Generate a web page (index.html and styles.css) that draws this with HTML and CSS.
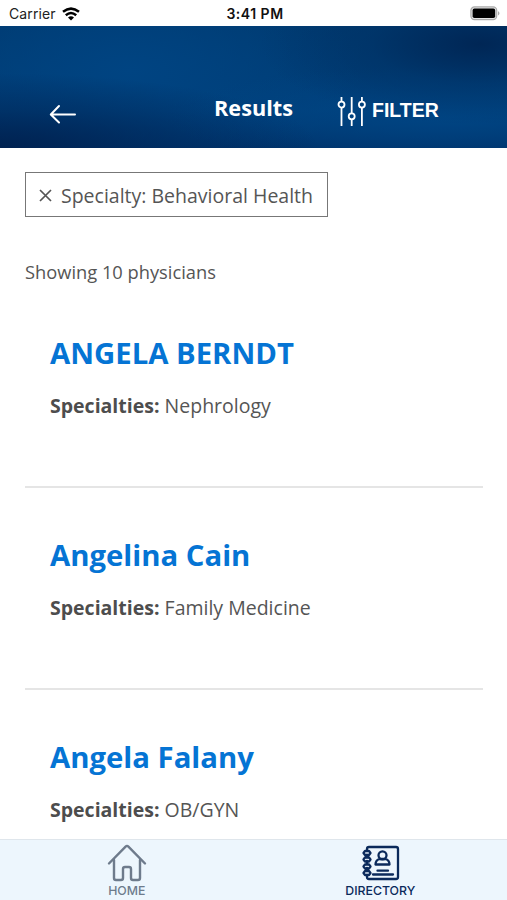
FILE: index.html
```html
<!DOCTYPE html>
<html lang="en">
<head>
<meta charset="utf-8">
    <title>Results</title>
    <link rel="stylesheet" href="styles.css">
</head>
<body>
    <div class="status">
        <div class="carrier">
            <span>Carrier</span>
            <svg width="18" height="14" viewBox="0 0 18 14">
                <path d="M1 4.8Q9-1.6 17 4.8M3.8 8.2Q9 3.8 14.2 8.2" fill="none" stroke="#000" stroke-width="2.5"/>
                <path d="M6 10.5Q9 8.2 12 10.5L9 13.6z"/>
            </svg>
        </div>
        <span class="time">3:41 PM</span>
        <div class="battery">
            <svg width="31" height="15" viewBox="0 0 31 15">
                <rect x=".9" y=".9" width="25.8" height="12.8" rx="3.6" fill="#e4e4e4" stroke="#aaa" stroke-width="1.2"/>
                <rect x="2.6" y="2.6" width="22.6" height="9.4" rx="1.8"/>
                <path d="M28 5q3 2.3 0 4.6z" fill="#aaa"/>
            </svg>
        </div>
    </div>

    <header class="header">
        <a class="back" href="#">
            <svg width="28" height="20" viewBox="0 0 28 20" fill="none" stroke="#fff" stroke-width="2" stroke-linecap="round" stroke-linejoin="round">
                <path d="M26 10.5H2M10 2L1.8 10.5L10 18.5"/>
            </svg>
        </a>
        <h1>Results</h1>
        <a class="filter" href="#">
            <svg width="30" height="31" viewBox="0 0 30 31" fill="none" stroke="#fff" stroke-width="1.8">
                <path d="M4.5 1v4.5M4.5 11.7V30M14.7 1v16.2M14.7 23.4V30M24.9 1v4.5M24.9 11.7V30"/>
                <circle cx="4.5" cy="8.6" r="3"/>
                <circle cx="14.7" cy="20.3" r="3"/>
                <circle cx="24.9" cy="8.6" r="3"/>
            </svg>
            <span>FILTER</span>
        </a>
    </header>

    <main class="content">
        <div class="tag">
            <svg width="13" height="13" viewBox="0 0 13 13" stroke="#555" stroke-width="1.7">
                <path d="M1 1l11 11M12 1L1 12"/>
            </svg>
            <span>Specialty: Behavioral Health</span>
        </div>
        <p class="count">Showing 10 physicians</p>
        <ul class="list">
            <li>
                <h2>ANGELA BERNDT</h2>
                <p><b>Specialties:</b> Nephrology</p>
            </li>
            <li>
                <h2>Angelina Cain</h2>
                <p><b>Specialties:</b> Family Medicine</p>
            </li>
            <li>
                <h2>Angela Falany</h2>
                <p><b>Specialties:</b> OB/GYN</p>
            </li>
        </ul>
    </main>

    <nav class="tabs">
        <a href="#">
            <svg width="40" height="40" viewBox="0 0 40 40" fill="none" stroke="#6e7b8c" stroke-width="2.4" stroke-linecap="round" stroke-linejoin="round">
                <path d="M2 20.5L18.6 3.6q1.4-1.4 2.8 0L38 20.5"/>
                <path d="M7 17v18q0 2 2 2h5q2 0 2-2V26q0-2 2-2h4q2 0 2 2v9q0 2 2 2h5q2 0 2-2V17"/>
            </svg>
            <span>HOME</span>
        </a>
        <a class="current" href="#">
            <svg width="40" height="40" viewBox="0 0 40 40" fill="none" stroke="#0b2a5b" stroke-width="2.3" stroke-linecap="round" stroke-linejoin="round">
                <path d="M7 8V6q0-2 2-2h27q2 0 2 2v28q0 2-2 2H9q-2 0-2-2v-2M7 12v2M7 18v3M7 25v3"/>
                <path d="M5 8h4l1.5 2L9 12H5l-1.5-2zM5 14.5h4l1.5 2l-1.5 2H5l-1.5-2zM5 21.5h4l1.5 2l-1.5 2H5l-1.5-2zM5 28h4l1.5 2l-1.5 2H5l-1.5-2z"/>
                <circle cx="22.5" cy="12.3" r="4"/>
                <path d="M15.5 21.5q0-4.500 4.300-5.500h5.400q4.300 1 4.300 5.500zM17.500 27.700h10.500M13 31.500h20"/>
            </svg>
            <span>DIRECTORY</span>
        </a>
    </nav>
</body>
</html>
```

FILE: styles.css
```css
* { box-sizing: border-box;}
body {
    margin: 0;height: 900px;overflow: hidden;display: flex;flex-direction: column;
    background: #fff;color: #555;font-family: "Open Sans", sans-serif;}
h1, h2, p, ul { margin: 0;padding: 0;}
a { text-decoration: none;}
svg { display: block;flex: none;}

.status {
    height: 25.5px;flex: none;display: grid;grid-template-columns: 1fr auto 1fr;align-items: center;
    padding: 2px 6px 0 9px;font-family: Inter, sans-serif;font-size: 14px;color: #222;}
.carrier { display: flex;align-items: center;gap: 6px;}
.carrier span { letter-spacing: 0.1px;}
.time { font-weight: 600;color: #111;letter-spacing: 0.5px;}
.battery { display: flex;justify-content: flex-end;}

.header {
    height: 122px;flex: none;display: flex;align-items: flex-start;padding-left: 49px;color: #fff;
    background:
        radial-gradient(ellipse 220px 80px at 480px 18px, rgba(0,36,82,.9), rgba(0,46,96,.45) 50%, rgba(0,50,100,0)),
        radial-gradient(ellipse 320px 75px at 0 122px, rgba(0,32,78,.9), rgba(0,32,78,0)),
        radial-gradient(ellipse 280px 50px at 445px 90px, rgba(0,69,132,.9), rgba(0,69,132,0)),
        radial-gradient(ellipse 230px 110px at 130px 45px, #004482, rgba(0,68,130,0)),
        linear-gradient(#003a70 0, #003f7a 70%, #00326a);}
.back { width: 165px;padding-top: 78px;}
.header h1 { width: 123px;padding-top: 67px;font-size: 21.7px;line-height: 30px;font-weight: 700;}
.filter { display: flex;align-items: center;gap: 5px;padding-top: 70px;color: #fff;}
.filter span { padding-bottom: 2px;font: bold 19.5px "Liberation Sans", sans-serif;}

.content { flex: 1;min-height: 0;overflow: hidden;padding: 24.5px 24px 0 25px;}
.tag {
    width: 303px;height: 45px;display: flex;align-items: center;gap: 9px;padding: 2px 0 0 13px;
    border: 1px solid #777;font-size: 19.5px;white-space: nowrap;}
.count { padding-top: 41px;font-size: 18.3px;line-height: 28px;}
.list { list-style: none;}
.list li { height: 202px;padding: 47px 25px 0;border-bottom: 2px solid #e5e5e5;}
.list h2 { font-size: 29.3px;line-height: 40px;font-weight: 700;color: #0574d4;}
.list p { padding-top: 18px;font-size: 19.5px;line-height: 30px;}
.list b { color: #4d4d4d;}

.tabs {
    height: 61px;flex: none;display: grid;grid-template-columns: 1fr 1fr;
    background: #edf6fd;border-top: 1px solid #dfe6ec;}
.tabs a {
    display: flex;flex-direction: column;align-items: center;padding-top: 3px;
    font-family: Inter, sans-serif;font-size: 12.3px;line-height: 15px;font-weight: 500;color: #6e7b8c;}
.tabs .current { color: #0b2a5b;}
```
